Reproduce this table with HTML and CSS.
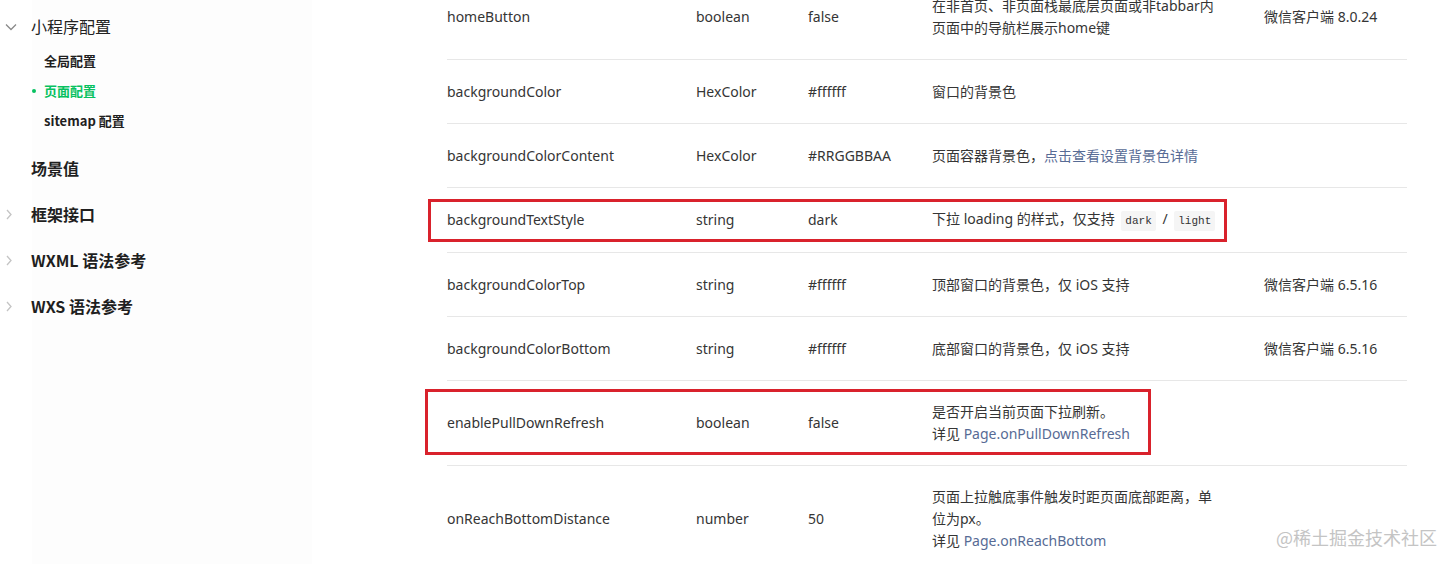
FILE: index.html
```html
<!DOCTYPE html>
<html lang="zh-CN">
<head>
<meta charset="utf-8">
<title>页面配置</title>
<link rel="stylesheet" href="styles.css">
</head>
<body>
<div class="page">
  <nav class="sidebar">
    <div class="nav-item open">
      <svg class="chev chev-down" width="12" height="8" viewBox="0 0 12 8"><path d="M1 1.5 L6 6.5 L11 1.5" fill="none" stroke="#8a8a8a" stroke-width="1.3"/></svg>
      <span class="nav-title regular">小程序配置</span>
    </div>
    <ul class="sub-list">
      <li class="sub-item">全局配置</li>
      <li class="sub-item active">页面配置</li>
      <li class="sub-item">sitemap 配置</li>
    </ul>
    <div class="nav-item">
      <span class="nav-title">场景值</span>
    </div>
    <div class="nav-item">
      <svg class="chev chev-right" width="6" height="11" viewBox="0 0 6 11"><path d="M1 1 L5 5.5 L1 10" fill="none" stroke="#c4c4c4" stroke-width="1.3"/></svg>
      <span class="nav-title">框架接口</span>
    </div>
    <div class="nav-item">
      <svg class="chev chev-right" width="6" height="11" viewBox="0 0 6 11"><path d="M1 1 L5 5.5 L1 10" fill="none" stroke="#c4c4c4" stroke-width="1.3"/></svg>
      <span class="nav-title">WXML 语法参考</span>
    </div>
    <div class="nav-item">
      <svg class="chev chev-right" width="6" height="11" viewBox="0 0 6 11"><path d="M1 1 L5 5.5 L1 10" fill="none" stroke="#c4c4c4" stroke-width="1.3"/></svg>
      <span class="nav-title">WXS 语法参考</span>
    </div>
  </nav>

  <main class="content">
    <div class="table">
      <div class="row first">
        <div class="cell">homeButton</div>
        <div class="cell">boolean</div>
        <div class="cell">false</div>
        <div class="cell desc">在非首页、非页面栈最底层页面或非tabbar内<br>页面中的导航栏展示home键</div>
        <div class="cell">微信客户端 8.0.24</div>
      </div>
      <div class="row">
        <div class="cell">backgroundColor</div>
        <div class="cell">HexColor</div>
        <div class="cell">#ffffff</div>
        <div class="cell desc">窗口的背景色</div>
        <div class="cell"></div>
      </div>
      <div class="row">
        <div class="cell">backgroundColorContent</div>
        <div class="cell">HexColor</div>
        <div class="cell">#RRGGBBAA</div>
        <div class="cell desc">页面容器背景色，<a class="link">点击查看设置背景色详情</a></div>
        <div class="cell"></div>
      </div>
      <div class="row">
        <div class="cell">backgroundTextStyle</div>
        <div class="cell">string</div>
        <div class="cell">dark</div>
        <div class="cell desc">下拉 loading 的样式，仅支持 <code class="code">dark</code> / <code class="code">light</code></div>
        <div class="cell"></div>
      </div>
      <div class="row">
        <div class="cell">backgroundColorTop</div>
        <div class="cell">string</div>
        <div class="cell">#ffffff</div>
        <div class="cell desc">顶部窗口的背景色，仅 iOS 支持</div>
        <div class="cell">微信客户端 6.5.16</div>
      </div>
      <div class="row">
        <div class="cell">backgroundColorBottom</div>
        <div class="cell">string</div>
        <div class="cell">#ffffff</div>
        <div class="cell desc">底部窗口的背景色，仅 iOS 支持</div>
        <div class="cell">微信客户端 6.5.16</div>
      </div>
      <div class="row">
        <div class="cell">enablePullDownRefresh</div>
        <div class="cell">boolean</div>
        <div class="cell">false</div>
        <div class="cell desc">是否开启当前页面下拉刷新。<br>详见 <a class="link">Page.onPullDownRefresh</a></div>
        <div class="cell"></div>
      </div>
      <div class="row">
        <div class="cell">onReachBottomDistance</div>
        <div class="cell">number</div>
        <div class="cell">50</div>
        <div class="cell desc">页面上拉触底事件触发时距页面底部距离，单<br>位为px。<br>详见 <a class="link">Page.onReachBottom</a></div>
        <div class="cell"></div>
      </div>
    </div>
  </main>

  <div class="mark mark-1"></div>
  <div class="mark mark-2"></div>
  <div class="watermark">@稀土掘金技术社区</div>
</div>
</body>
</html>
```

FILE: styles.css
```css
* { box-sizing: border-box; }

html, body {
  margin: 0;
  padding: 0;
  background: #ffffff;
  height: 564px;
  overflow: hidden;
}

body {
  font-family: "Noto Sans", "Noto Sans CJK SC", sans-serif;
  color: #353535;
}

.page {
  position: relative;
  display: flex;
  height: 564px;
}

/* Sidebar */
.sidebar {
  width: 312px;
  flex: 0 0 312px;
  padding-top: 3px;
  background: linear-gradient(to right, #ffffff 32px, #fdfdfd 32px);
}

.nav-item {
  display: flex;
  align-items: center;
  height: 46px;
  position: relative;
  padding-left: 31px;
}

.chev {
  position: absolute;
}

.chev-down {
  left: 5px;
  top: 20px;
}

.chev-right {
  left: 6px;
  top: 18px;
}

.nav-title {
  font-family: "Noto Sans CJK SC", sans-serif;
  font-size: 16px;
  font-weight: 700;
  color: #1f1f1f;
}

.nav-title.regular {
  font-weight: 400;
  color: #222;
}

.sub-list {
  list-style: none;
  margin: -3px 0 9px 0;
  padding: 0;
}

.sub-item {
  height: 30px;
  line-height: 30px;
  padding-left: 44px;
  font-family: "Noto Sans CJK SC", sans-serif;
  font-size: 13px;
  font-weight: 700;
  color: #1f1f1f;
  position: relative;
}

.sub-item.active {
  color: #07c160;
}

.sub-item.active::before {
  content: "";
  position: absolute;
  left: 32px;
  top: 13px;
  width: 4px;
  height: 4px;
  border-radius: 50%;
  background: #07c160;
}

/* Content */
.content {
  flex: 1;
  padding-left: 135px;
}

.table {
  width: 960px;
  margin-top: -25px;
}

.row {
  display: grid;
  grid-template-columns: 249px 112px 124px 332px 143px;
  align-items: center;
  min-height: 64px;
  border-bottom: 1px solid #e7e7e7;
}

.cell {
  padding: 20px 0;
  font-size: 14px;
  line-height: 22px;
  color: #353535;
}

.desc {
  font-family: "Noto Sans", "Noto Sans CJK SC", sans-serif;
  padding-right: 30px;
}

.link {
  color: #576b95;
  text-decoration: none;
}

.code {
  font-family: "Liberation Mono", "DejaVu Sans Mono", monospace;
  font-size: 11px;
  background: #f5f5f5;
  padding: 4px 4px;
  margin: 0 3px;
  color: #333;
  border-radius: 2px;
}

/* Annotation boxes */
.mark {
  position: absolute;
  border: 3px solid #d9222c;
}

.mark-1 {
  left: 428px;
  top: 199px;
  width: 799px;
  height: 43px;
}

.mark-2 {
  left: 425px;
  top: 389px;
  width: 726px;
  height: 66px;
}

.watermark {
  position: absolute;
  left: 1276px;
  top: 524px;
  font-family: "Noto Sans CJK SC", sans-serif;
  font-size: 18px;
  color: #c4c4c4;
  letter-spacing: 0;
}
```
